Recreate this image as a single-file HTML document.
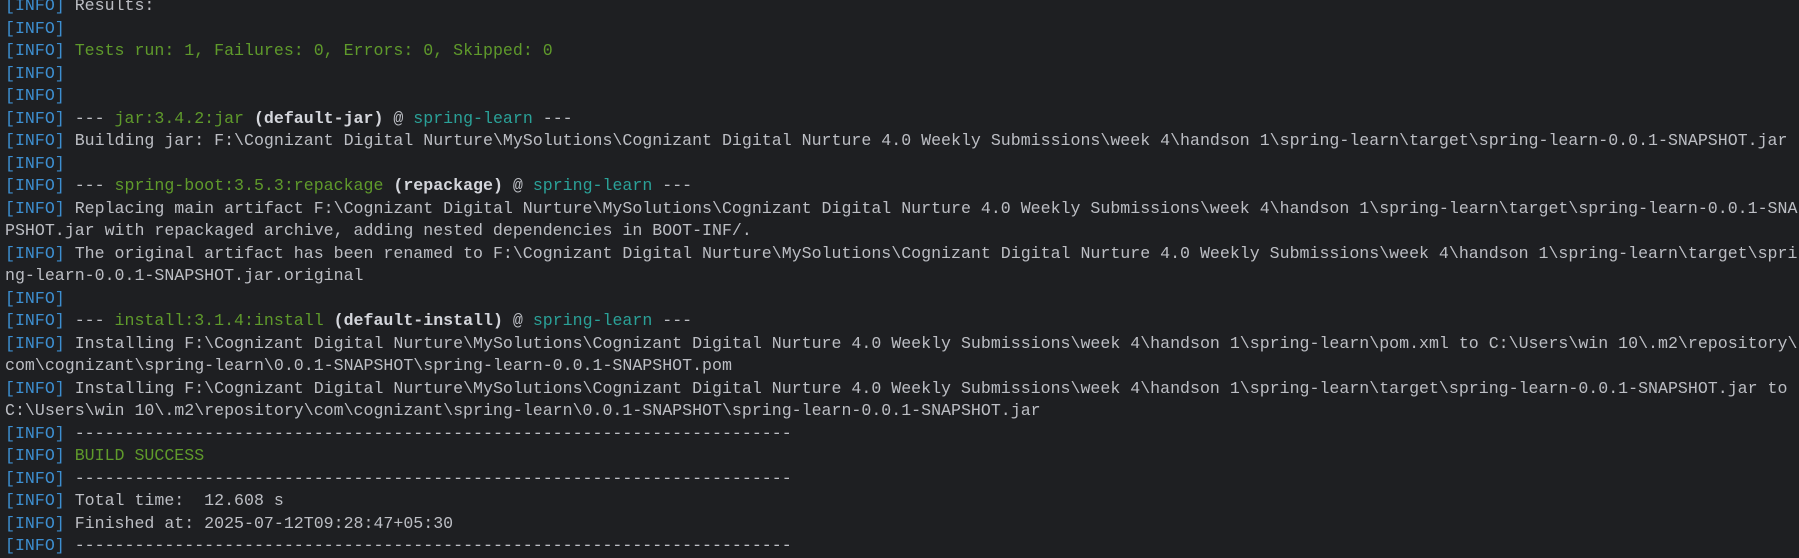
<!DOCTYPE html>
<html><head><meta charset="utf-8"><style>
html,body{margin:0;padding:0;background:#1e1f22;width:1799px;height:551px;overflow:hidden}
pre{margin:0;position:absolute;left:5px;top:-5px;font-family:"Liberation Mono","DejaVu Sans Mono",monospace;font-size:16.6px;line-height:22.5px;color:#bcbec4;white-space:pre}
.i{color:#3d8fd1}.g{color:#5f9a2b}.t{color:#2aa198}.b{font-weight:bold;color:#d4d6dc}
</style></head><body><pre><span class="i">[INFO]</span> Results:
<span class="i">[INFO]</span>
<span class="i">[INFO]</span> <span class="g">Tests run: 1, Failures: 0, Errors: 0, Skipped: 0</span>
<span class="i">[INFO]</span>
<span class="i">[INFO]</span>
<span class="i">[INFO]</span> --- <span class="g">jar:3.4.2:jar</span> <span class="b">(default-jar)</span> @ <span class="t">spring-learn</span> ---
<span class="i">[INFO]</span> Building jar: F:\Cognizant Digital Nurture\MySolutions\Cognizant Digital Nurture 4.0 Weekly Submissions\week 4\handson 1\spring-learn\target\spring-learn-0.0.1-SNAPSHOT.jar
<span class="i">[INFO]</span>
<span class="i">[INFO]</span> --- <span class="g">spring-boot:3.5.3:repackage</span> <span class="b">(repackage)</span> @ <span class="t">spring-learn</span> ---
<span class="i">[INFO]</span> Replacing main artifact F:\Cognizant Digital Nurture\MySolutions\Cognizant Digital Nurture 4.0 Weekly Submissions\week 4\handson 1\spring-learn\target\spring-learn-0.0.1-SNA
PSHOT.jar with repackaged archive, adding nested dependencies in BOOT-INF/.
<span class="i">[INFO]</span> The original artifact has been renamed to F:\Cognizant Digital Nurture\MySolutions\Cognizant Digital Nurture 4.0 Weekly Submissions\week 4\handson 1\spring-learn\target\spri
ng-learn-0.0.1-SNAPSHOT.jar.original
<span class="i">[INFO]</span>
<span class="i">[INFO]</span> --- <span class="g">install:3.1.4:install</span> <span class="b">(default-install)</span> @ <span class="t">spring-learn</span> ---
<span class="i">[INFO]</span> Installing F:\Cognizant Digital Nurture\MySolutions\Cognizant Digital Nurture 4.0 Weekly Submissions\week 4\handson 1\spring-learn\pom.xml to C:\Users\win 10\.m2\repository\
com\cognizant\spring-learn\0.0.1-SNAPSHOT\spring-learn-0.0.1-SNAPSHOT.pom
<span class="i">[INFO]</span> Installing F:\Cognizant Digital Nurture\MySolutions\Cognizant Digital Nurture 4.0 Weekly Submissions\week 4\handson 1\spring-learn\target\spring-learn-0.0.1-SNAPSHOT.jar to
C:\Users\win 10\.m2\repository\com\cognizant\spring-learn\0.0.1-SNAPSHOT\spring-learn-0.0.1-SNAPSHOT.jar
<span class="i">[INFO]</span> ------------------------------------------------------------------------
<span class="i">[INFO]</span> <span class="g">BUILD SUCCESS</span>
<span class="i">[INFO]</span> ------------------------------------------------------------------------
<span class="i">[INFO]</span> Total time:  12.608 s
<span class="i">[INFO]</span> Finished at: 2025-07-12T09:28:47+05:30
<span class="i">[INFO]</span> ------------------------------------------------------------------------</pre></body></html>
